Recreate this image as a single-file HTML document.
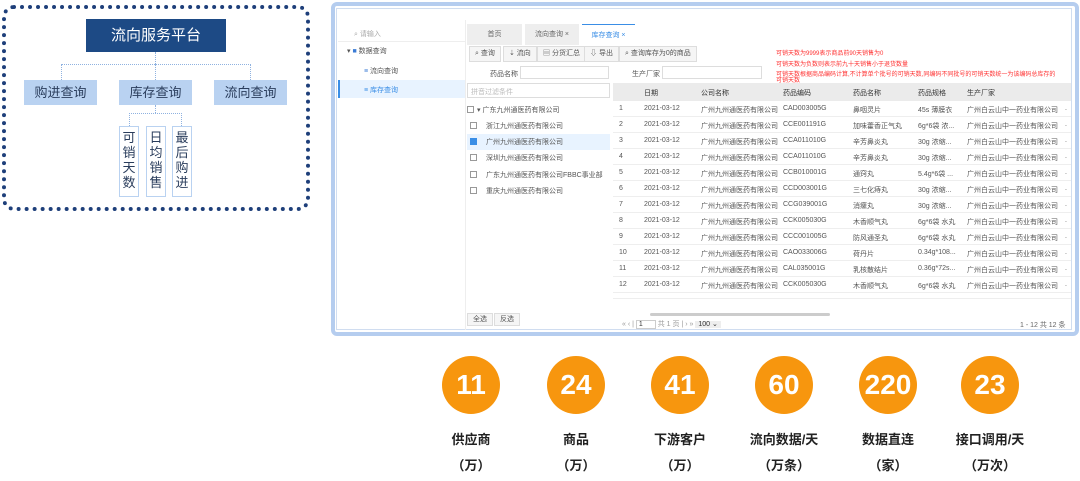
<!DOCTYPE html>
<html><head><meta charset="utf-8"><style>
*{margin:0;padding:0;box-sizing:border-box}
body{width:1080px;height:481px;background:#fff;position:relative;overflow:hidden;font-family:"Liberation Sans","Noto Sans CJK SC",sans-serif}
.a{position:absolute}
.dash{position:absolute;left:2px;top:5px;width:308px;height:206px;border:4px dotted #1e3f7a;border-radius:12px}
.top{left:86px;top:19px;width:140px;height:33px;background:#1d4a85;color:#fff;font-size:15px;text-align:center;line-height:33px}
.lv{height:25px;width:73px;background:#b9d2f1;color:#2a3d5c;font-size:13px;text-align:center;line-height:25px;top:80px}
.vb{top:126px;width:20px;height:71px;border:1px solid #b9d2f1;color:#2a3d5c;font-size:13px;text-align:center;line-height:15px;padding-top:3px;overflow:hidden}
.ln{border-color:#8fb2e0;border-style:dotted;border-width:0}
.panel{left:331px;top:2px;width:748px;height:334px;border:4px solid #b5cdef;border-radius:6px;background:#fff}
.inner{left:336px;top:8px;width:736px;height:322px;border:1px solid #d0ddf0;background:#fff}
.t{font-size:7px;color:#555;white-space:nowrap}
.tab{top:24px;height:21px;background:#eee;font-size:7px;color:#666;text-align:center;line-height:21px}
.btn{top:46px;height:16px;border:1px solid #ddd;background:#f5f5f5;font-size:7px;color:#555;line-height:14px;padding:0 5px}
.row{position:absolute;left:613px;width:458px;height:16px;border-bottom:1px solid #eee;font-size:7px;color:#555}
.row span{position:absolute;top:4px;white-space:nowrap}
.red{color:#f33;font-size:6px;position:absolute;left:776px;white-space:nowrap}
.c{width:58px;height:58px;border-radius:50%;background:#f7960e;color:#fff;font-weight:bold;font-size:28px;text-align:center;line-height:58px;top:356px}
.lb{top:429px;width:110px;text-align:center;font-size:13px;font-weight:bold;color:#222}
.lb2{top:455px;width:110px;text-align:center;font-size:13px;font-weight:bold;color:#222}
.cb{position:absolute;width:7px;height:7px;border:1px solid #999;background:#fff}
</style></head><body>
<div class="dash"></div>
<div class="a top">流向服务平台</div>
<div class="a ln" style="left:155px;top:52px;height:12px;border-left-width:1px"></div>
<div class="a ln" style="left:61px;top:64px;width:190px;height:16px;border-top-width:1px;border-left-width:1px;border-right-width:1px"></div>
<div class="a ln" style="left:155px;top:64px;height:16px;border-left-width:1px"></div>
<div class="a lv" style="left:24px">购进查询</div>
<div class="a lv" style="left:119px">库存查询</div>
<div class="a lv" style="left:214px">流向查询</div>
<div class="a ln" style="left:155px;top:105px;height:8px;border-left-width:1px"></div>
<div class="a ln" style="left:129px;top:113px;width:53px;height:13px;border-top-width:1px;border-left-width:1px;border-right-width:1px"></div>
<div class="a vb" style="left:119px">可<br>销<br>天<br>数</div>
<div class="a vb" style="left:146px">日<br>均<br>销<br>售</div>
<div class="a vb" style="left:172px">最<br>后<br>购<br>进</div>

<div class="a panel"></div>
<div class="a inner"></div>
<div class="a t" style="left:354px;top:29px;color:#aaa">⌕ 请输入</div>
<div class="a" style="left:338px;top:41px;width:127px;border-top:1px solid #eee"></div>
<div class="a t" style="left:347px;top:46px">▾ <span style="color:#3a7bd5">■</span> 数据查询</div>
<div class="a t" style="left:364px;top:66px"><span style="color:#3a7bd5">≡</span> 流向查询</div>
<div class="a" style="left:338px;top:80px;width:127px;height:18px;background:#e8f3ff;border-left:2px solid #3a8ee6"></div>
<div class="a t" style="left:364px;top:85px;color:#3a8ee6">≡ 库存查询</div>
<div class="a" style="left:465px;top:20px;height:310px;border-left:1px solid #eee"></div>
<div class="a tab" style="left:467px;width:55px">首页</div>
<div class="a tab" style="left:525px;width:54px">流向查询 ×</div>
<div class="a tab" style="left:582px;width:53px;background:#fff;color:#3a8ee6;border-top:1px solid #3a8ee6">库存查询 ×</div>
<div class="a btn" style="left:469px">⌕ 查询</div>
<div class="a btn" style="left:503px">⇣ 流向</div>
<div class="a btn" style="left:537px">▤ 分货汇总</div>
<div class="a btn" style="left:584px">⇩ 导出</div>
<div class="a btn" style="left:619px">⌕ 查询库存为0的商品</div>
<div class="a t" style="left:490px;top:69px">药品名称</div>
<div class="a" style="left:520px;top:66px;width:89px;height:13px;border:1px solid #ddd"></div>
<div class="a t" style="left:632px;top:69px">生产厂家</div>
<div class="a" style="left:662px;top:66px;width:100px;height:13px;border:1px solid #ddd"></div>
<div class="red" style="top:48px">可销天数为9999表示商品前90天销售为0</div>
<div class="red" style="top:59px">可销天数为负数则表示前九十天销售小于退货数量</div>
<div class="red" style="top:69px">可销天数根据商品编码计算,不计算单个批号的可销天数,同编码不同批号的可销天数统一为该编码总库存的</div>
<div class="red" style="top:75px">可销天数</div>
<div class="a" style="left:467px;top:83px;width:143px;height:15px;border:1px solid #ddd"></div>
<div class="a t" style="left:471px;top:87px;color:#bbb">拼音过滤条件</div>
<div class="cb" style="left:467px;top:106px"></div><div class="a t" style="left:477px;top:105px">▾ 广东九州通医药有限公司</div>
<div class="cb" style="left:470px;top:122px"></div><div class="a t" style="left:486px;top:121px">浙江九州通医药有限公司</div>
<div class="a" style="left:467px;top:134px;width:143px;height:16px;background:#e8f3ff"></div>
<div class="cb" style="left:470px;top:138px;background:#3a8ee6;border-color:#3a8ee6"></div><div class="a t" style="left:486px;top:137px">广州九州通医药有限公司</div>
<div class="cb" style="left:470px;top:154px"></div><div class="a t" style="left:486px;top:153px">深圳九州通医药有限公司</div>
<div class="cb" style="left:470px;top:171px"></div><div class="a t" style="left:486px;top:170px">广东九州通医药有限公司FBBC事业部</div>
<div class="cb" style="left:470px;top:187px"></div><div class="a t" style="left:486px;top:186px">重庆九州通医药有限公司</div>
<div class="a btn" style="left:467px;top:313px;height:13px;line-height:11px">全选</div>
<div class="a btn" style="left:494px;top:313px;height:13px;line-height:11px">反选</div>
<div class="a" style="left:613px;top:83px;width:458px;height:18px;background:#ebebeb;font-size:7px;color:#333">
<span class="a" style="left:31px;top:5px">日期</span><span class="a" style="left:88px;top:5px">公司名称</span><span class="a" style="left:170px;top:5px">药品编码</span><span class="a" style="left:240px;top:5px">药品名称</span><span class="a" style="left:305px;top:5px">药品规格</span><span class="a" style="left:354px;top:5px">生产厂家</span></div>
<div id="rows"></div>
<div class="a" style="left:613px;top:298px;width:458px;height:32px;border-top:1px solid #eee"></div>
<div class="a" style="left:650px;top:313px;width:180px;height:3px;background:#ccc;border-radius:2px"></div>
<div class="a t" style="left:622px;top:319px;color:#999">« ‹ | <span style="border:1px solid #ccc;padding:0 12px 0 2px;color:#333">1</span> 共 1 页 | › » <span style="background:#eee;padding:0 3px;color:#333">100 ⌄</span></div>
<div class="a t" style="left:1020px;top:320px;color:#666">1 - 12 共 12 条</div>
<script>
var d=[["CAD003005G","鼻咽灵片","45s 薄膜衣"],["CCE001191G","加味藿香正气丸","6g*6袋 浓..."],["CCA011010G","辛芳鼻炎丸","30g 浓缩..."],["CCA011010G","辛芳鼻炎丸","30g 浓缩..."],["CCB010001G","通窍丸","5.4g*6袋 ..."],["CCD003001G","三七化痔丸","30g 浓缩..."],["CCG039001G","消瘰丸","30g 浓缩..."],["CCK005030G","木香顺气丸","6g*6袋 水丸"],["CCC001005G","防风通圣丸","6g*6袋 水丸"],["CAO033006G","荷丹片","0.34g*108..."],["CAL035001G","乳核散结片","0.36g*72s..."],["CCK005030G","木香顺气丸","6g*6袋 水丸"]];
var h="";for(var i=0;i<12;i++){var y=101+i*16;h+='<div class="row" style="top:'+y+'px"><span style="left:6px">'+(i+1)+'</span><span style="left:31px">2021-03-12</span><span style="left:88px">广州九州通医药有限公司</span><span style="left:170px">'+d[i][0]+'</span><span style="left:240px">'+d[i][1]+'</span><span style="left:305px">'+d[i][2]+'</span><span style="left:354px">广州白云山中一药业有限公司</span><span style="left:452px">.</span></div>';}
document.getElementById("rows").innerHTML=h;
</script>
<div class="a c" style="left:442px">11</div>
<div class="a c" style="left:547px">24</div>
<div class="a c" style="left:651px">41</div>
<div class="a c" style="left:755px">60</div>
<div class="a c" style="left:859px">220</div>
<div class="a c" style="left:961px">23</div>
<div class="a lb" style="left:416px">供应商</div><div class="a lb2" style="left:416px">（万）</div>
<div class="a lb" style="left:521px">商品</div><div class="a lb2" style="left:521px">（万）</div>
<div class="a lb" style="left:625px">下游客户</div><div class="a lb2" style="left:625px">（万）</div>
<div class="a lb" style="left:729px">流向数据/天</div><div class="a lb2" style="left:729px">（万条）</div>
<div class="a lb" style="left:833px">数据直连</div><div class="a lb2" style="left:833px">（家）</div>
<div class="a lb" style="left:935px">接口调用/天</div><div class="a lb2" style="left:935px">（万次）</div>
</body></html>
